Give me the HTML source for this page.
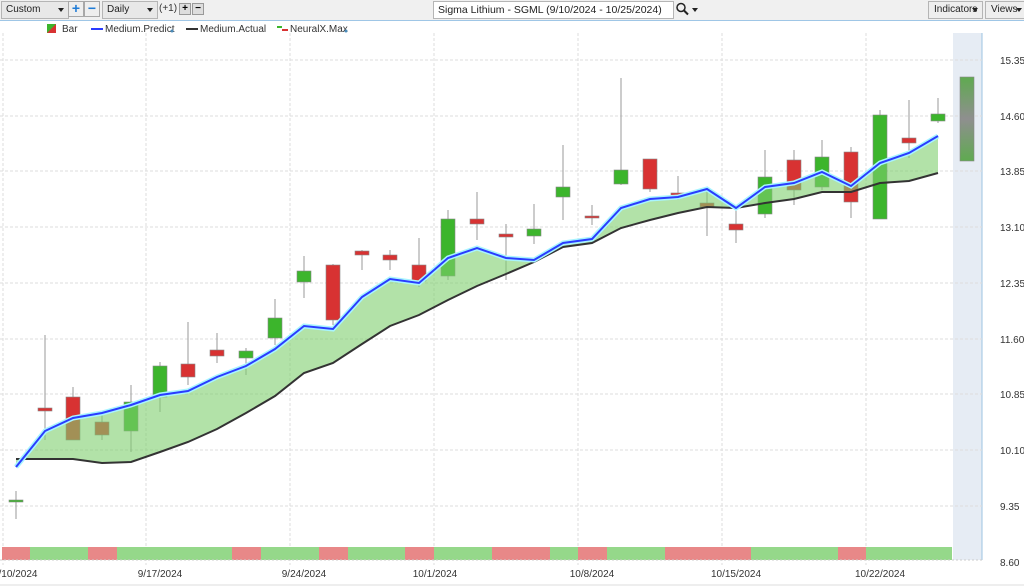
<!DOCTYPE html>
<html><head><meta charset="utf-8"><style>
body{margin:0;width:1024px;height:587px;overflow:hidden;background:#fff;font-family:"Liberation Sans",sans-serif;}
.tb{position:absolute;left:0;top:0;width:1024px;height:20px;background:#f0f0f0;border-bottom:1px solid #9fc6e6;}
.dd{position:absolute;top:1px;height:16px;border:1px solid #b5b5b5;background:#e8e8e8;font-size:10px;line-height:16px;padding-left:4px;box-sizing:content-box;color:#222}
.dd:after{content:"";position:absolute;right:4px;top:6px;border-left:3.5px solid transparent;border-right:3.5px solid transparent;border-top:4px solid #222}
.b{position:absolute;top:1px;width:14px;height:14px;border:1px solid #a8a8a8;background:#eee;color:#1e7bd6;font-weight:bold;font-size:14px;line-height:13px;text-align:center}
.s{position:absolute;top:3px;width:10px;height:10px;border:1px solid #999;background:#ddd;font-size:10px;line-height:9px;text-align:center;font-weight:bold}
</style></head><body>
<div class="tb">
<div class="dd" style="left:1px;width:62px">Custom</div>
<div class="b" style="left:68px">+</div>
<div class="b" style="left:84px">−</div>
<div class="dd" style="left:102px;width:50px">Daily</div>
<div style="position:absolute;left:159px;top:3px;font-size:10px;color:#333">(+1)</div>
<div class="s" style="left:179px">+</div>
<div class="s" style="left:192px">−</div>
<div style="position:absolute;left:433px;top:1px;width:235px;height:16px;border:1px solid #b5b5b5;background:#fff;font-size:10.5px;line-height:16px;padding-left:4px;color:#222">Sigma Lithium - SGML (9/10/2024 - 10/25/2024)</div>
<svg style="position:absolute;left:675px;top:2px" width="24" height="14"><circle cx="6" cy="5.5" r="4" fill="none" stroke="#222" stroke-width="1.5"/><line x1="9" y1="8.5" x2="13" y2="12.5" stroke="#222" stroke-width="2"/><polygon points="17,6 23,6 20,10" fill="#222"/></svg>
<div class="dd" style="left:928px;width:48px;background:#eee;padding-left:5px">Indicators</div>
<div class="dd" style="left:985px;width:35px;background:#eee;padding-left:5px">Views</div>
</div>
<svg style="position:absolute;left:0;top:21px" width="1024" height="566" viewBox="0 21 1024 566" font-family="Liberation Sans, sans-serif">
<rect x="953" y="33" width="29" height="527" fill="#e6ecf4"/>
<line x1="982" y1="33" x2="982" y2="560" stroke="#9cc3e2"/>
<g stroke="#ddd" stroke-dasharray="3,2">
<line x1="0" y1="60" x2="982" y2="60"/><line x1="0" y1="116" x2="982" y2="116"/><line x1="0" y1="171" x2="982" y2="171"/><line x1="0" y1="227" x2="982" y2="227"/><line x1="0" y1="283" x2="982" y2="283"/><line x1="0" y1="339" x2="982" y2="339"/><line x1="0" y1="394" x2="982" y2="394"/><line x1="0" y1="450" x2="982" y2="450"/><line x1="0" y1="506" x2="982" y2="506"/>
<line x1="3" y1="33" x2="3" y2="565"/><line x1="146" y1="33" x2="146" y2="565"/><line x1="290" y1="33" x2="290" y2="565"/><line x1="434" y1="33" x2="434" y2="565"/><line x1="578" y1="33" x2="578" y2="565"/><line x1="722" y1="33" x2="722" y2="565"/><line x1="866" y1="33" x2="866" y2="565"/>
</g>
<g font-size="10" fill="#333">
<text x="1000" y="64">15.35</text><text x="1000" y="120">14.60</text><text x="1000" y="175">13.85</text><text x="1000" y="231">13.10</text><text x="1000" y="287">12.35</text><text x="1000" y="343">11.60</text><text x="1000" y="398">10.85</text><text x="1000" y="454">10.10</text><text x="1000" y="510">9.35</text><text x="1000" y="566">8.60</text>
</g>
<g font-size="10" fill="#333">
<rect x="47" y="24" width="9" height="9" fill="#3cb52c"/><polygon points="47,33 56,24 56,33" fill="#d83232"/>
<text x="62" y="32">Bar</text>
<line x1="91" y1="29" x2="103" y2="29" stroke="#2a3cff" stroke-width="2"/><text x="105" y="32">Medium.Predict</text><circle cx="172" cy="31" r="1.5" fill="#4a8ab8"/>
<line x1="186" y1="29" x2="198" y2="29" stroke="#333" stroke-width="2"/><text x="200" y="32">Medium.Actual</text>
<line x1="277" y1="27" x2="282" y2="27" stroke="#3cb52c" stroke-width="2"/><line x1="282" y1="30" x2="288" y2="30" stroke="#d83232" stroke-width="2"/><text x="290" y="32">NeuralX.Max</text><circle cx="346" cy="31" r="1.5" fill="#4a8ab8"/>
</g>
<g stroke="#999" stroke-width="1">
<line x1="16" y1="491" x2="16" y2="519"/><line x1="45" y1="335" x2="45" y2="440"/><line x1="73" y1="387" x2="73" y2="440"/><line x1="102" y1="413" x2="102" y2="440"/><line x1="131" y1="385" x2="131" y2="452"/><line x1="160" y1="362" x2="160" y2="412"/><line x1="188" y1="322" x2="188" y2="385"/><line x1="217" y1="333" x2="217" y2="363"/><line x1="246" y1="348" x2="246" y2="375"/><line x1="275" y1="299" x2="275" y2="345"/><line x1="304" y1="256" x2="304" y2="298"/><line x1="333" y1="264" x2="333" y2="325"/><line x1="362" y1="250" x2="362" y2="270"/><line x1="390" y1="250" x2="390" y2="270"/><line x1="419" y1="238" x2="419" y2="287"/><line x1="448" y1="210" x2="448" y2="280"/><line x1="477" y1="192" x2="477" y2="240"/><line x1="506" y1="224" x2="506" y2="280"/><line x1="534" y1="204" x2="534" y2="244"/><line x1="563" y1="145" x2="563" y2="220"/><line x1="592" y1="205" x2="592" y2="225"/><line x1="621" y1="78" x2="621" y2="185"/><line x1="650" y1="159" x2="650" y2="192"/><line x1="678" y1="176" x2="678" y2="200"/><line x1="707" y1="190" x2="707" y2="236"/><line x1="736" y1="210" x2="736" y2="243"/><line x1="765" y1="150" x2="765" y2="218"/><line x1="794" y1="150" x2="794" y2="205"/><line x1="822" y1="140" x2="822" y2="190"/><line x1="851" y1="147" x2="851" y2="218"/><line x1="880" y1="110" x2="880" y2="219"/><line x1="909" y1="100" x2="909" y2="158"/><line x1="938" y1="98" x2="938" y2="123"/>
</g>
<g stroke="#888" stroke-width="0.6">
<rect x="9" y="500" width="14" height="2" fill="#3cb52c"/>
<rect x="38" y="408" width="14" height="3" fill="#d83232"/>
<rect x="66" y="397" width="14" height="43" fill="#d83232"/>
<rect x="95" y="422" width="14" height="13" fill="#d83232"/>
<rect x="124" y="402" width="14" height="29" fill="#3cb52c"/>
<rect x="153" y="366" width="14" height="31" fill="#3cb52c"/>
<rect x="181" y="364" width="14" height="13" fill="#d83232"/>
<rect x="210" y="350" width="14" height="6" fill="#d83232"/>
<rect x="239" y="351" width="14" height="7" fill="#3cb52c"/>
<rect x="268" y="318" width="14" height="20" fill="#3cb52c"/>
<rect x="297" y="271" width="14" height="11" fill="#3cb52c"/>
<rect x="326" y="265" width="14" height="55" fill="#d83232"/>
<rect x="355" y="251" width="14" height="4" fill="#d83232"/>
<rect x="383" y="255" width="14" height="5" fill="#d83232"/>
<rect x="412" y="265" width="14" height="16" fill="#d83232"/>
<rect x="441" y="219" width="14" height="57" fill="#3cb52c"/>
<rect x="470" y="219" width="14" height="5" fill="#d83232"/>
<rect x="499" y="234" width="14" height="3" fill="#d83232"/>
<rect x="527" y="229" width="14" height="7" fill="#3cb52c"/>
<rect x="556" y="187" width="14" height="10" fill="#3cb52c"/>
<rect x="585" y="216" width="14" height="2" fill="#d83232"/>
<rect x="614" y="170" width="14" height="14" fill="#3cb52c"/>
<rect x="643" y="159" width="14" height="30" fill="#d83232"/>
<rect x="671" y="193" width="14" height="3" fill="#d83232"/>
<rect x="700" y="203" width="14" height="4" fill="#d83232"/>
<rect x="729" y="224" width="14" height="6" fill="#d83232"/>
<rect x="758" y="177" width="14" height="37" fill="#3cb52c"/>
<rect x="787" y="160" width="14" height="30" fill="#d83232"/>
<rect x="815" y="157" width="14" height="30" fill="#3cb52c"/>
<rect x="844" y="152" width="14" height="50" fill="#d83232"/>
<rect x="873" y="115" width="14" height="104" fill="#3cb52c"/>
<rect x="902" y="138" width="14" height="5" fill="#d83232"/>
<rect x="931" y="114" width="14" height="7" fill="#3cb52c"/>
</g>
<polygon fill="#7fcf6e" fill-opacity="0.6" points="16,467 45,431 73,418 102,413 131,405 160,395 188,391 217,377 246,366 275,349 304,326 333,329 362,297 390,279 419,283 448,258 477,248 506,258 534,260 563,243 592,239 621,208 650,199 678,197 707,189 736,208 765,187 794,183 822,172 851,186 880,163 909,153 938,136 938,173 909,181 880,183 851,192 822,192 794,199 765,203 736,208 707,207 678,213 650,220 621,228 592,243 563,247 534,262 506,274 477,286 448,300 419,315 390,326 362,344 333,363 304,373 275,396 246,413 217,429 188,442 160,452 131,462 102,463 73,459 45,459 16,459"/>
<polyline fill="none" stroke="#333" stroke-width="2" points="16,459 45,459 73,459 102,463 131,462 160,452 188,442 217,429 246,413 275,396 304,373 333,363 362,344 390,326 419,315 448,300 477,286 506,274 534,262 563,247 592,243 621,228 650,220 678,213 707,207 736,208 765,203 794,199 822,192 851,192 880,183 909,181 938,173"/>
<polyline fill="none" stroke="#a8f4ff" stroke-width="5" points="16,467 45,431 73,418 102,413 131,405 160,395 188,391 217,377 246,366 275,349 304,326 333,329 362,297 390,279 419,283 448,258 477,248 506,258 534,260 563,243 592,239 621,208 650,199 678,197 707,189 736,208 765,187 794,183 822,172 851,186 880,163 909,153 938,136"/>
<polyline fill="none" stroke="#2a3cff" stroke-width="2" points="16,467 45,431 73,418 102,413 131,405 160,395 188,391 217,377 246,366 275,349 304,326 333,329 362,297 390,279 419,283 448,258 477,248 506,258 534,260 563,243 592,239 621,208 650,199 678,197 707,189 736,208 765,187 794,183 822,172 851,186 880,163 909,153 938,136"/>
<defs><linearGradient id="g" x1="0" y1="0" x2="0" y2="1"><stop offset="0" stop-color="#5faa50"/><stop offset="0.5" stop-color="#8f8f8f"/><stop offset="1" stop-color="#5faa50"/></linearGradient></defs>
<rect x="960" y="77" width="14" height="84" fill="url(#g)" stroke="#888" stroke-width="0.6"/>
<g>
<rect x="2" y="547" width="28" height="13" fill="#e88888"/><rect x="30" y="547" width="58" height="13" fill="#95d88a"/><rect x="88" y="547" width="29" height="13" fill="#e88888"/><rect x="117" y="547" width="115" height="13" fill="#95d88a"/><rect x="232" y="547" width="29" height="13" fill="#e88888"/><rect x="261" y="547" width="58" height="13" fill="#95d88a"/><rect x="319" y="547" width="29" height="13" fill="#e88888"/><rect x="348" y="547" width="57" height="13" fill="#95d88a"/><rect x="405" y="547" width="29" height="13" fill="#e88888"/><rect x="434" y="547" width="58" height="13" fill="#95d88a"/><rect x="492" y="547" width="58" height="13" fill="#e88888"/><rect x="550" y="547" width="28" height="13" fill="#95d88a"/><rect x="578" y="547" width="29" height="13" fill="#e88888"/><rect x="607" y="547" width="58" height="13" fill="#95d88a"/><rect x="665" y="547" width="86" height="13" fill="#e88888"/><rect x="751" y="547" width="87" height="13" fill="#95d88a"/><rect x="838" y="547" width="28" height="13" fill="#e88888"/><rect x="866" y="547" width="86" height="13" fill="#95d88a"/>
</g>
<line x1="0" y1="560" x2="982" y2="560" stroke="#ccc" stroke-dasharray="2,2"/>
<g font-size="10" fill="#333" text-anchor="middle">
<text x="18" y="577">/10/2024</text><text x="160" y="577">9/17/2024</text><text x="304" y="577">9/24/2024</text><text x="435" y="577">10/1/2024</text><text x="592" y="577">10/8/2024</text><text x="736" y="577">10/15/2024</text><text x="880" y="577">10/22/2024</text>
</g>
<line x1="0" y1="585" x2="1024" y2="585" stroke="#ddd"/>
</svg>
</body></html>
